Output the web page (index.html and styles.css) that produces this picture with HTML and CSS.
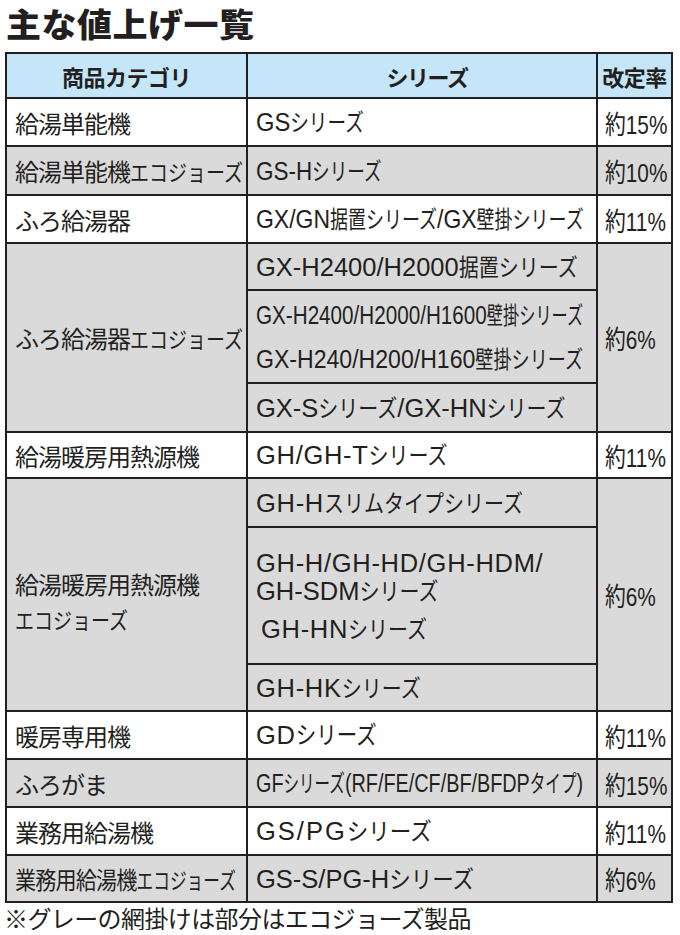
FILE: index.html
```html
<!DOCTYPE html>
<html lang="ja">
<head>
<meta charset="utf-8">
<title>主な値上げ一覧</title>
<link rel="stylesheet" href="styles.css">
</head>
<body>
<div class="title"><span>主な値上げ一覧</span></div>
<div class="tbl">
  <div class="c hd">商品カテゴリ</div>
  <div class="c hd hd-ser">シリーズ</div>
  <div class="c hd">改定率</div>

  <div class="c cat"><span>給湯単能機</span></div>
  <div class="c ser"><span class="tx sq93">GS<span class="j">シリーズ</span></span></div>
  <div class="c pct"><span class="tx">約15%</span></div>

  <div class="c cat g"><span>給湯単能機<span class="k">エコジョーズ</span></span></div>
  <div class="c ser g"><span class="tx sq88">GS-H<span class="j">シリーズ</span></span></div>
  <div class="c pct g"><span class="tx">約10%</span></div>

  <div class="c cat"><span>ふろ給湯器</span></div>
  <div class="c ser"><span class="tx sq90">GX/GN<span class="j">据置シリーズ</span>/GX<span class="j">壁掛シリーズ</span></span></div>
  <div class="c pct"><span class="tx">約11%</span></div>

  <div class="c cat g span3"><span>ふろ給湯器<span class="k">エコジョーズ</span></span></div>
  <div class="c ser g"><span class="tx">GX-H2400/H2000<span class="j">据置シリーズ</span></span></div>
  <div class="c pct g span3"><span class="tx">約6%</span></div>
  <div class="c ser g">
    <div class="wide-lines">
      <span class="tx sq81">GX-H2400/H2000/H1600<span class="j">壁掛シリーズ</span></span><br>
      <span class="tx sq91">GX-H240/H200/H160<span class="j">壁掛シリーズ</span></span>
    </div>
  </div>
  <div class="c ser g"><span class="tx">GX-S<span class="j">シリーズ</span>/GX-HN<span class="j">シリーズ</span></span></div>

  <div class="c cat"><span>給湯暖房用熱源機</span></div>
  <div class="c ser"><span class="tx ls1">GH/GH-T<span class="j">シリーズ</span></span></div>
  <div class="c pct"><span class="tx">約11%</span></div>

  <div class="c cat g span3 multi"><span>給湯暖房用熱源機<br><span class="k">エコジョーズ</span></span></div>
  <div class="c ser g"><span class="tx ls1">GH-H<span class="j">スリムタイプシリーズ</span></span></div>
  <div class="c pct g span3"><span class="tx">約6%</span></div>
  <div class="c ser g">
    <div class="stack">
      <div class="pair"><span class="tx ls1">GH-H/GH-HD/GH-HDM/</span><br><span class="tx">GH-SDM<span class="j">シリーズ</span></span></div>
      <div class="hn"><span class="tx ls1">GH-HN<span class="j">シリーズ</span></span></div>
    </div>
  </div>
  <div class="c ser g"><span class="tx ls1">GH-HK<span class="j">シリーズ</span></span></div>

  <div class="c cat"><span>暖房専用機</span></div>
  <div class="c ser"><span class="tx ls1">GD<span class="j jm">シリーズ</span></span></div>
  <div class="c pct"><span class="tx">約11%</span></div>

  <div class="c cat g"><span>ふろがま</span></div>
  <div class="c ser g"><span class="tx sq78">GF<span class="j">シリーズ</span>(RF/FE/CF/BF/BFDP<span class="j">タイプ</span>)</span></div>
  <div class="c pct g"><span class="tx">約15%</span></div>

  <div class="c cat"><span>業務用給湯機</span></div>
  <div class="c ser"><span class="tx ls2">GS/PG<span class="j jw">シリーズ</span></span></div>
  <div class="c pct"><span class="tx">約11%</span></div>

  <div class="c cat g"><span class="sq-cat">業務用給湯機<span class="k">エコジョーズ</span></span></div>
  <div class="c ser g"><span class="tx">GS-S/PG-H<span class="j jw">シリーズ</span></span></div>
  <div class="c pct g"><span class="tx">約6%</span></div>
</div>
<p class="note">※グレーの網掛けは部分はエコジョーズ製品</p>
</body>
</html>
```
FILE: styles.css
```css
html, body {
  margin: 0;
  padding: 0;
  background: #fff;
}
body {
  width: 680px;
  font-family: "Liberation Sans", "Noto Sans CJK JP", sans-serif;
  color: #231f20;
}
.title {
  height: 52px;
  box-sizing: border-box;
  padding: 0 0 8px 6px;
  display: flex;
  align-items: center;
}
.title span {
  display: inline-block;
  font-family: "Noto Sans CJK JP", sans-serif;
  font-weight: 900;
  font-size: 35px;
  letter-spacing: 0.5px;
  line-height: 1;
  transform: scaleY(0.93);
}
.tbl {
  margin-left: 5px;
  width: 668px;
  box-sizing: border-box;
  display: grid;
  grid-template-columns: 239px 348px 73px;
  grid-template-rows: 43px 46px 47px 46px 45px 91px 47px 44px 47px 135px 45px 46px 46px 46px 45px;
  gap: 2px;
  padding: 2px;
  background: #231f20;
}
.c {
  background: #fff;
  display: flex;
  align-items: center;
  min-width: 0;
}
.g {
  background: #dadadb;
}
.span3 {
  grid-row: span 3;
}
.hd {
  background: #c5e6f8;
  justify-content: center;
  font-family: "Noto Sans CJK JP", sans-serif;
  font-weight: 700;
  font-size: 22px;
  letter-spacing: -0.5px;
}
.hd-ser {
  padding-left: 10px;
  letter-spacing: -1.5px;
}
.cat {
  padding-left: 8px;
  font-family: "Noto Sans CJK JP", sans-serif;
  font-size: 24px;
  letter-spacing: -1px;
  line-height: 35px;
  white-space: nowrap;
}
.cat.multi {
  padding-top: 12px;
  box-sizing: border-box;
}
.k {
  display: inline-block;
  font-size: 19px;
  letter-spacing: 0;
  line-height: 1;
  transform: scaleY(1.18);
  transform-origin: 50% 94%;
}
.sq-cat {
  display: inline-block;
  transform: scaleX(0.88);
  transform-origin: left center;
}
.ser {
  padding-left: 8px;
  font-size: 25.5px;
  line-height: 28px;
}
.tx {
  display: inline-block;
  white-space: nowrap;
  transform-origin: left center;
}
.j {
  display: inline-block;
  font-size: 20px;
  letter-spacing: 0;
  line-height: 1;
  transform: scaleY(1.2);
  transform-origin: 50% 94%;
}
.j.jm { font-size: 20.5px; }
.j.jw { font-size: 21.5px; transform: scaleY(1.12); }
.ls1 { letter-spacing: 0.7px; }
.ls2 { letter-spacing: 2px; }
.sq93 { transform: scaleX(0.93); }
.sq88 { transform: scaleX(0.88); }
.sq90 { transform: scaleX(0.9); }
.sq91 { transform: scaleX(0.905); }
.sq81 { transform: scaleX(0.81); }
.sq78 { transform: scaleX(0.777); }
.wide-lines {
  line-height: 44px;
}
.stack {
  display: flex;
  flex-direction: column;
}
.pair {
  line-height: 28px;
}
.hn {
  margin-top: 10px;
  padding-left: 5px;
  line-height: 28px;
}
.pct {
  padding-left: 7px;
  font-size: 26px;
}
.pct .tx {
  transform: scaleX(0.8);
}
.note {
  margin: 3px 0 0 0;
  padding-left: 4px;
  font-family: "Noto Sans CJK JP", sans-serif;
  font-size: 24px;
  line-height: 24px;
  letter-spacing: -0.6px;
  white-space: nowrap;
}
```
